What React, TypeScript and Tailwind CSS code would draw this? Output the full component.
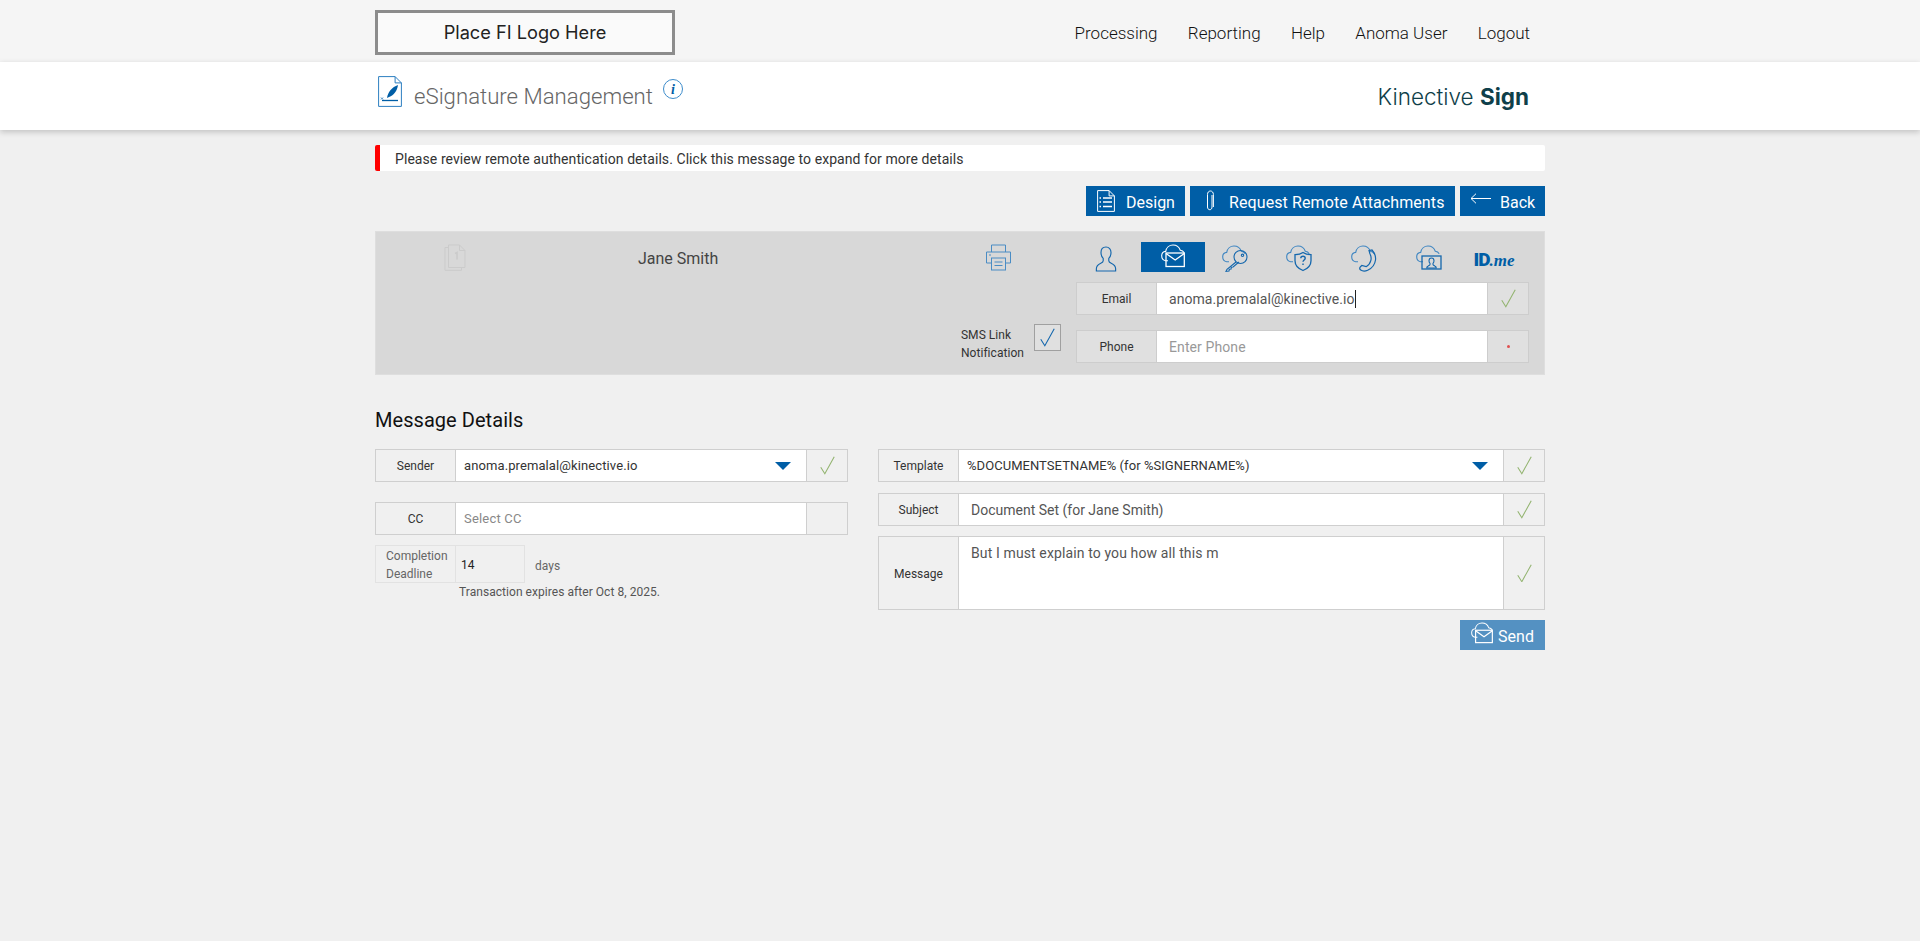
import type { ReactNode } from "react";

const BLUE = "#1467ad";

// nube compartida por los iconos de autenticación
function Cloud({ color = "#3f86c2" }: { color?: string }) {
    return (
        <path
            d="M7 16.700H4.600C2 16.300 .7 14 .7 11.800c0-2.400 1.800-4.200 4-4.400C5.300 3.800 8.200 1 12 1c3.600 0 6.300 2.300 7.300 5.200 1.700.2 3.100 1.100 3.900 2.500"
            fill="none"
            stroke={color}
            strokeWidth="1.100"
        />
    );
}

function PersonIcon() {
    return (
        <svg width="24" height="26" viewBox="0 0 22 27" fill="none" stroke={BLUE} strokeWidth="1.200" className="mt-[4px]">
            <path d="M11 1C7.800 1 5.800 3.400 5.800 6.800c0 2.600.9 4.700 2.300 6.100v2.400c0 1.300-.9 2-2.500 2.700C3 19.200 1 20.400 1 23.600V26h20v-2.400c0-3.200-2-4.400-4.600-5.600-1.600-.7-2.500-1.400-2.500-2.700v-2.400c1.400-1.400 2.300-3.500 2.300-6.100C16.200 3.400 14.200 1 11 1z" />
        </svg>
    );
}

function MailCloudIcon({ size = 24 }: { size?: number }) {
    return (
        <svg width={size} height={(size * 26) / 24} viewBox="0 0 24 26" fill="none" stroke="#fff">
            <Cloud color="#fff" />
            <rect x="5" y="9" width="18.300" height="13.500" strokeWidth="1.300" />
            <path d="M5 9.500l9.200 6.500 9.100-6.500" strokeWidth="1.300" />
        </svg>
    );
}

function KeyCloudIcon() {
    return (
        <svg width="26" height="27" viewBox="0 0 26 27" fill="none" stroke={BLUE} strokeWidth="1.100" className="mt-[3px]">
            <Cloud />
            <circle cx="18.500" cy="12" r="6.500" />
            <circle cx="20.500" cy="10.300" r="1.200" />
            <path d="M14 17L5 24.300l-1 2 3-.3.3-1.700 1.800-.2.200-1.800 1.800-.3 5.800-5" />
        </svg>
    );
}

function ShieldCloudIcon() {
    return (
        <svg width="26" height="27" viewBox="0 0 26 27" fill="none" stroke={BLUE} strokeWidth="1.100" className="mt-[3px]">
            <Cloud />
            <path d="M17 7.500c2 1.500 5 2.200 8 2.200v6c0 4.500-3.500 8-8 9.800-4.500-1.800-8-5.300-8-9.800v-6c3 0 6-.7 8-2.200z" strokeWidth="1.300" />
            <path d="M14.800 13.300c0-1.300 1-2.100 2.200-2.100s2.200.8 2.200 2c0 1.800-2.200 1.800-2.200 3.600M17 18.500v1.400" strokeWidth="1.400" />
        </svg>
    );
}

function PhoneCloudIcon() {
    return (
        <svg width="26" height="27" viewBox="0 0 26 27" fill="none" stroke={BLUE} strokeWidth="1.200" className="mt-[3px]">
            <Cloud />
            <path d="M18 5.500l3-.5c2.500 2.800 4 6.300 3.500 10-.6 4.500-3.500 8.300-7.800 10.200-2.300 1-5.200 1-7-.2-1.300-.9-1.300-2.300-.2-3.300l1.300-1.200 4.300 1.200c2.300-1.200 4-3.200 4.700-6 .6-2.300.3-4.800-.8-6.700z" />
        </svg>
    );
}

function VideoCloudIcon() {
    return (
        <svg width="26" height="27" viewBox="0 0 26 27" fill="none" stroke={BLUE} strokeWidth="1.100" className="mt-[3px]">
            <Cloud />
            <rect x="6" y="11" width="19" height="13" strokeWidth="1.300" />
            <path d="M15.500 13c-1.600 0-2.500 1.200-2.500 2.800 0 1.100.4 2 1 2.600v1c0 .7-.8 1-1.800 1.500-.9.4-1.500 1-1.500 2.100h9.600c0-1.100-.6-1.700-1.500-2.100-1-.5-1.800-.8-1.800-1.500v-1c.6-.6 1-1.500 1-2.600 0-1.600-.9-2.800-2.500-2.800z" />
        </svg>
    );
}

function CheckMark({ color = "#93b470", size = 15 }: { color?: string; size?: number }) {
    return (
        <svg width={size} height={(size * 17) / 14} viewBox="0 0 14 17" fill="none" stroke={color} strokeWidth="1">
            <path d="M.7 10.500l3.800 6L13.300.7" />
        </svg>
    );
}

function Caret() {
    return (
        <svg width="16" height="8" viewBox="0 0 16 8" className="shrink-0">
            <path d="M0 0h16L8 8z" fill="#005ea6" />
        </svg>
    );
}

type FieldRowProps = {
    label: string;
    children: ReactNode;
    heightClass?: string;
    labelClass?: string;
    borderClass?: string;
    sideClass?: string;
    side?: ReactNode;
};

function FieldRow({
    label,
    children,
    heightClass = "h-[33px]",
    labelClass = "bg-[#f0f0f0]",
    borderClass = "border-[#cfcfcf]",
    sideClass = "bg-[#f0f0f0]",
    side,
}: FieldRowProps) {
    return (
        <div className={`flex border ${heightClass} ${borderClass}`}>
            <div className={`flex w-[80px] shrink-0 items-center justify-center border-r pt-[1px] text-[12px] text-[#333] ${labelClass} ${borderClass}`}>
                {label}
            </div>
            <div className="flex min-w-0 flex-1 bg-white">{children}</div>
            <div className={`flex w-[41px] shrink-0 items-center justify-center border-l ${sideClass} ${borderClass}`}>
                {side}
            </div>
        </div>
    );
}

function ActionButton({ icon, label, widthClass, textClass }: { icon: ReactNode; label: string; widthClass: string; textClass: string }) {
    return (
        <button className={`flex h-[30px] items-center bg-[#005ea6] text-[16px] text-white ${widthClass}`}>
            {icon}
            <span className={`pt-[3px] ${textClass}`}>{label}</span>
        </button>
    );
}

export default function App() {
    return (
        <div className="min-h-screen bg-[#f0f0f0] font-[Roboto,sans-serif]">
            {/* barra superior */}
            <div className="h-[62px] bg-[#f5f5f5]">
                <div className="mx-auto flex h-full w-[1170px] items-start justify-between">
                    <div className="mt-[10px] flex h-[45px] w-[300px] items-center justify-center border-[3px] border-[#8c8c8c] bg-[#fafafa] font-[Inter,sans-serif] text-[18.2px] text-[#222]">
                        Place FI Logo Here
                    </div>
                    <nav className="mt-[23px] flex gap-[30.3px] pr-[15px] text-[17px] leading-[20px] font-light text-[#111]">
                        <span>Processing</span>
                        <span>Reporting</span>
                        <span>Help</span>
                        <span>Anoma User</span>
                        <span>Logout</span>
                    </nav>
                </div>
            </div>

            {/* título */}
            <div className="h-[68px] bg-white shadow-[0_2px_6px_rgba(0,0,0,0.2)]">
                <div className="mx-auto flex h-full w-[1170px] items-start">
                    <svg width="24" height="31" viewBox="0 0 24 31" fill="none" className="mt-[14px] ml-[3px]">
                        <path d="M.6.6h16.500l6.300 6.300v23.500H.6z M17.100.6v6.300h6.300" stroke="#2d7fc1" strokeWidth="1" />
                        <path d="M9 22c1-6 5-11 11-13-1 6-4 10-9 12z" fill="#005ea6" />
                        <path d="M4 24.500h16" stroke="#005ea6" strokeWidth="1.300" />
                        <path d="M3 21.500l2 2M5 21.500l-2 2" stroke="#005ea6" strokeWidth=".7" />
                    </svg>
                    <h1 className="mt-[18px] ml-[12px] text-[22.2px] leading-[32px] font-light text-[#666]">eSignature Management</h1>
                    <div className="mt-[17px] ml-[10px] flex h-[20px] w-[20px] items-center justify-center rounded-full border border-[#3d8ccb] font-['Liberation_Serif',serif] text-[14px] font-bold text-[#005ea6] italic">
                        i
                    </div>
                    <div className="mt-[20px] ml-auto pr-[16px] font-[Inter,sans-serif] text-[22.5px] leading-[30px] font-light text-[#0f3f4a]">
                        Kinective <span className="font-bold">Sign</span>
                    </div>
                </div>
            </div>

            <main className="mx-auto w-[1170px]">
                {/* aviso */}
                <div className="mt-[15px] flex h-[26px] items-center rounded-[2px] border-l-[5px] border-[#ff0000] bg-white pt-[2px] pl-[15px] text-[14px] tracking-[0.07px] text-[#333]">
                    Please review remote authentication details. Click this message to expand for more details
                </div>

                <div className="mt-[15px] flex justify-end gap-[5px]">
                    <ActionButton
                        widthClass="w-[99px]"
                        textClass="ml-[11px]"
                        label="Design"
                        icon={
                            <svg width="18" height="22" viewBox="0 0 18 22" fill="none" stroke="#fff" className="ml-[11px]">
                                <path d="M.6.6h11.500l5.300 5.300v15.500H.6z M12.100.6v5.300h5.300" />
                                <path d="M6 8h9M6 12h9M6 16.500h9M2.500 8h1.500M2.500 12h1.500M2.500 16.500h1.500" strokeWidth="1.400" />
                            </svg>
                        }
                    />
                    <ActionButton
                        widthClass="w-[265px]"
                        textClass="ml-[14px] tracking-[0.1px]"
                        label="Request Remote Attachments"
                        icon={
                            <svg width="10" height="22" viewBox="0 0 10 22" fill="none" stroke="#fff" className="ml-[15px]">
                                <path d="M7 5v12c0 1.600-.8 2.700-2.200 2.700S2.500 18.600 2.500 17V4.500C2.500 2.500 3.600 1 5.400 1s3 1.500 3 3.500V17" />
                            </svg>
                        }
                    />
                    <ActionButton
                        widthClass="w-[85px]"
                        textClass="ml-[9px]"
                        label="Back"
                        icon={
                            <svg width="21" height="11" viewBox="0 0 21 11" fill="none" stroke="#fff" className="mb-[6px] ml-[10px]">
                                <path d="M21 5.500H1M6 .7L1 5.500l5 4.800" />
                            </svg>
                        }
                    />
                </div>

                {/* panel del firmante */}
                <div className="mt-[15px] flex h-[144px] border border-[#dedede] bg-[#d8d8d8]">
                    <div className="flex w-[700px] flex-col">
                        <div className="flex items-start pt-[12px]">
                            <svg width="22" height="27" viewBox="0 0 22 27" fill="none" stroke="#cbcbcb" className="ml-[68px]">
                                <path d="M4.500 1h11l5.500 5.500V23.500H4.500z M15.500 1v5.500H21 M4.500 3.500H1v22.800h16.500v-2.800" />
                                <path d="M11 9.500l2-1v7" strokeWidth="1.600" />
                            </svg>
                            <span className="mt-[3px] ml-[172px] text-[16px] leading-[24px] text-[#444]">Jane Smith</span>
                            <svg width="27" height="27" viewBox="0 0 27 27" fill="none" stroke="#4a8cc4" className="mr-[64px] ml-auto">
                                <path d="M6.500 8V1h14v7 M6.500 19H1.500V8h24v11h-5" />
                                <path d="M4 11h2" />
                                <rect x="6.500" y="14" width="14" height="12" />
                                <path d="M9.500 18h8M9.500 21.500h8" />
                            </svg>
                        </div>
                        <div className="mt-auto flex items-start justify-end gap-[10px] pr-[15px] pb-[12px]">
                            <div className="pt-[2px] text-[12px] leading-[18px] tracking-[0.05px] text-[#333]">
                                SMS Link
                                <br />
                                Notification
                            </div>
                            <div className="flex h-[27px] w-[27px] items-center justify-center border border-[#a0a0a0] bg-[#e0e0e0]">
                                <CheckMark color="#1467ad" />
                            </div>
                        </div>
                    </div>
                    <div className="w-[453px] pt-[10px]">
                        <div className="flex h-[30px] items-center">
                            <div className="flex w-[60px] justify-center">
                                <PersonIcon />
                            </div>
                            <div className="ml-[5px] flex h-[30px] w-[64px] items-center justify-center bg-[#005ea6]">
                                <MailCloudIcon />
                            </div>
                            <div className="flex w-[65px] justify-center pr-[5px]">
                                <KeyCloudIcon />
                            </div>
                            <div className="flex w-[65px] justify-center pr-[5px]">
                                <ShieldCloudIcon />
                            </div>
                            <div className="flex w-[65px] justify-center pr-[5px]">
                                <PhoneCloudIcon />
                            </div>
                            <div className="flex w-[65px] justify-center pr-[5px]">
                                <VideoCloudIcon />
                            </div>
                            <div className="mt-[6px] flex w-[65px] items-baseline justify-center pr-[5px] text-[#005ea6]">
                                <span className="text-[19px] leading-[20px] font-black tracking-[-1px]">ID</span>
                                <span className="font-['Liberation_Serif',serif] text-[17px] leading-[20px] font-bold italic">.me</span>
                            </div>
                        </div>
                        <div className="mt-[10px]">
                            <FieldRow
                                label="Email"
                                labelClass="bg-[#e0e0e0]"
                                sideClass="bg-[#e0e0e0]"
                                borderClass="border-[#cdcdcd]"
                                side={<CheckMark />}
                            >
                                <span className="flex items-center pt-[1px] pl-[12px] text-[14px] tracking-[0.06px] text-[#555]">
                                    anoma.premalal@kinective.io
                                    <span className="h-[18px] w-px bg-[#222]" />
                                </span>
                            </FieldRow>
                        </div>
                        <div className="mt-[15px]">
                            <FieldRow
                                label="Phone"
                                labelClass="bg-[#e0e0e0]"
                                sideClass="bg-[#e0e0e0]"
                                borderClass="border-[#cdcdcd]"
                                side={<span className="h-[3px] w-[3px] rounded-full bg-[#e05050]" />}
                            >
                                <span className="flex items-center pt-[1px] pl-[12px] text-[14px] tracking-[0.1px] text-[#999]">Enter Phone</span>
                            </FieldRow>
                        </div>
                    </div>
                </div>

                <h2 className="mt-[33px] text-[20px] leading-[24px] tracking-[0.05px] text-[#111]">Message Details</h2>

                <div className="mt-[17px] flex gap-[30px]">
                    {/* columna izquierda */}
                    <div className="w-[473px]">
                        <FieldRow label="Sender" side={<CheckMark />}>
                            <span className="flex flex-1 items-center justify-between pr-[15px] pl-[8px] text-[13px] tracking-[0.1px] text-[#333]">
                                anoma.premalal@kinective.io
                                <Caret />
                            </span>
                        </FieldRow>
                        <div className="mt-[20px]">
                            <FieldRow label="CC">
                                <span className="flex items-center pl-[8px] text-[13px] tracking-[0.2px] text-[#888]">Select CC</span>
                            </FieldRow>
                        </div>
                        <div className="mt-[10px] flex items-center">
                            <div className="flex h-[38px] w-[150px] border border-[#e2e2e2]">
                                <div className="flex w-[80px] shrink-0 flex-col justify-center border-r border-[#e2e2e2] pt-[2px] pl-[10px] text-[12px] leading-[18px] text-[#666]">
                                    <span>Completion</span>
                                    <span>Deadline</span>
                                </div>
                                <div className="flex items-center pt-[2px] pl-[5px] text-[12px] text-[#222]">14</div>
                            </div>
                            <span className="ml-[10px] pt-[3px] text-[12px] text-[#666]">days</span>
                        </div>
                        <p className="mt-[1px] ml-[84px] text-[12px] leading-[16px] tracking-[0.05px] text-[#555]">Transaction expires after Oct 8, 2025.</p>
                    </div>

                    {/* columna derecha */}
                    <div className="w-[667px]">
                        <FieldRow label="Template" side={<CheckMark />}>
                            <span className="flex flex-1 items-center justify-between pt-[1px] pr-[15px] pl-[8px] text-[13px] tracking-[0.05px] text-[#333]">
                                %DOCUMENTSETNAME% (for %SIGNERNAME%)
                                <Caret />
                            </span>
                        </FieldRow>
                        <div className="mt-[11px]">
                            <FieldRow label="Subject" side={<CheckMark />}>
                                <span className="flex items-center pt-[1px] pl-[12px] text-[14px] text-[#555]">Document Set (for Jane Smith)</span>
                            </FieldRow>
                        </div>
                        <div className="mt-[10px]">
                            <FieldRow label="Message" heightClass="h-[74px]" side={<CheckMark />}>
                                <span className="pt-[6px] pl-[12px] text-[14px] leading-[20px] tracking-[0.12px] text-[#555]">But I must explain to you how all this m</span>
                            </FieldRow>
                        </div>
                        <div className="mt-[10px] flex justify-end">
                            <button className="flex h-[30px] w-[85px] items-center justify-center gap-[5px] bg-[#5491c2] text-[16px] text-white">
                                <span className="mb-[3px]">
                                    <MailCloudIcon size={22} />
                                </span>
                                <span className="pt-[3px]">Send</span>
                            </button>
                        </div>
                    </div>
                </div>
            </main>
        </div>
    );
}
